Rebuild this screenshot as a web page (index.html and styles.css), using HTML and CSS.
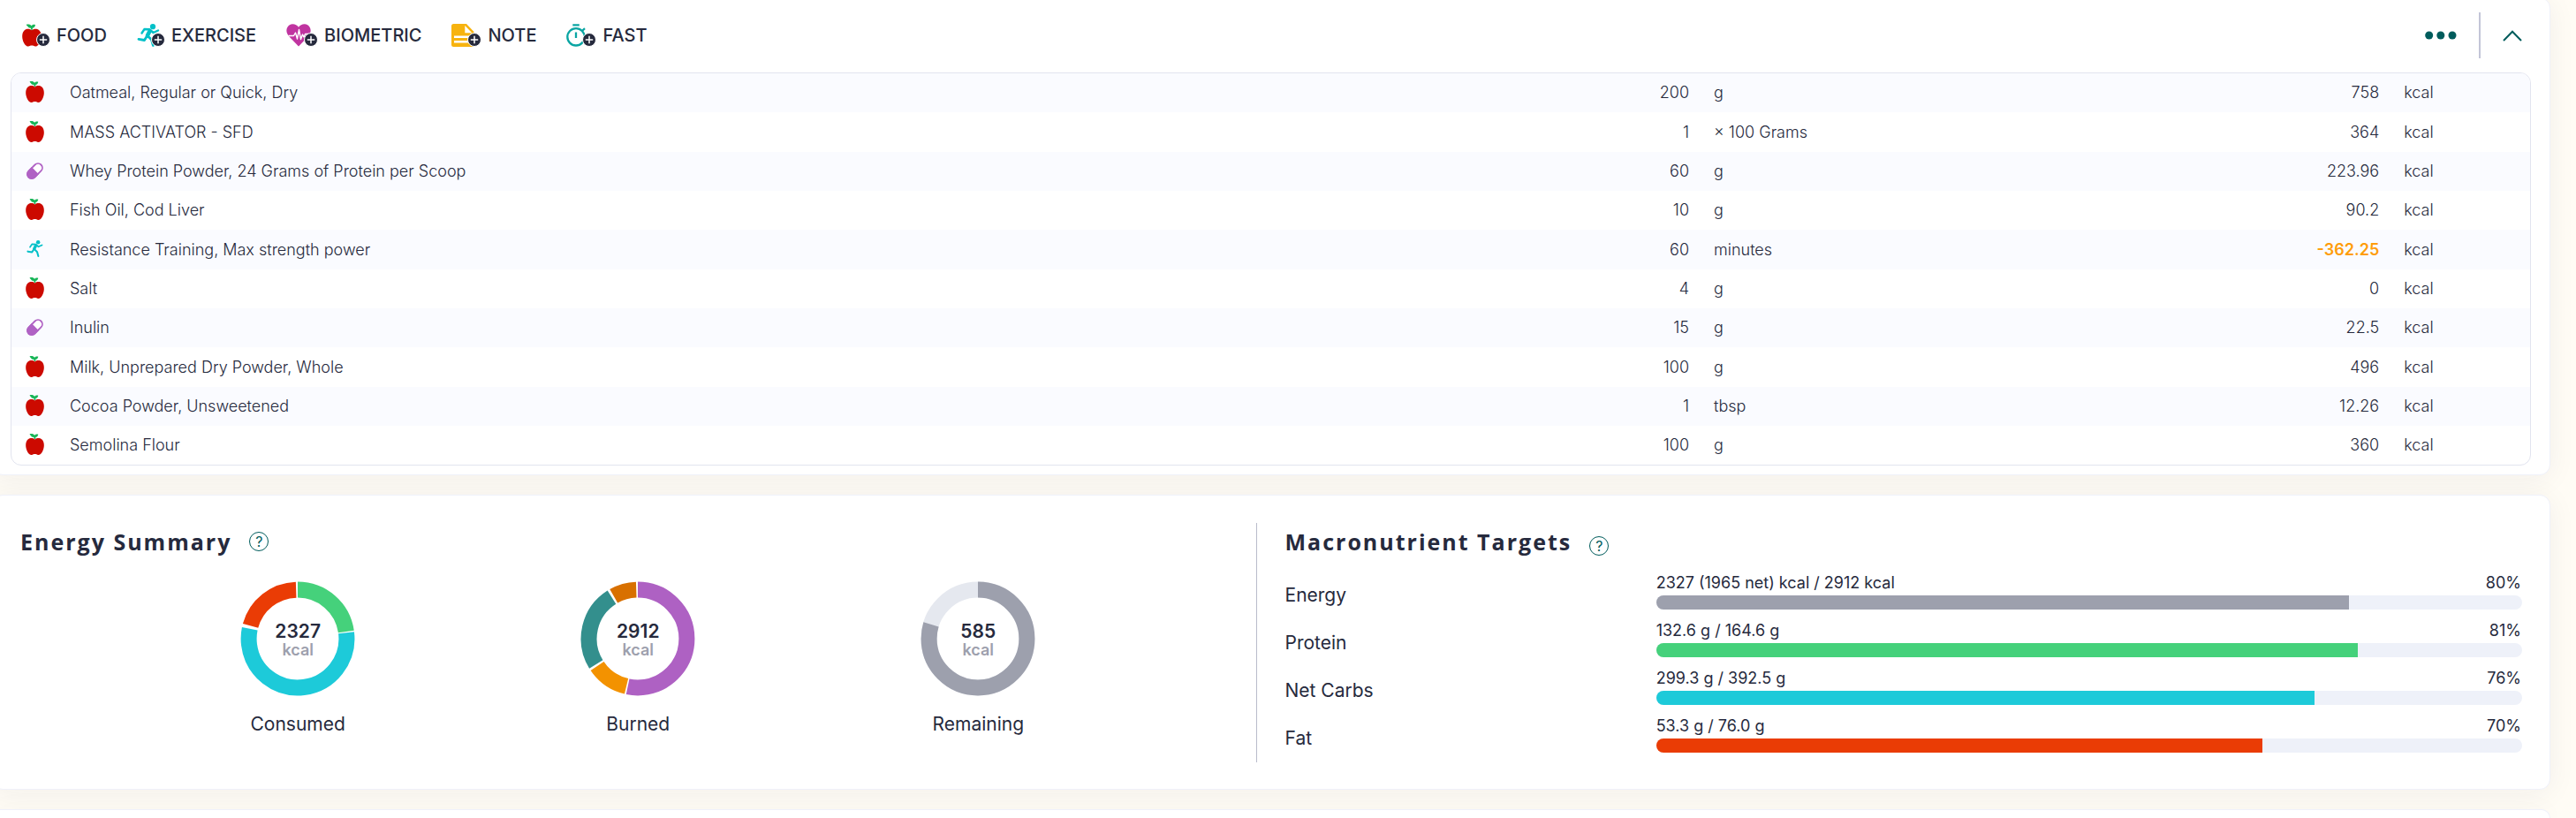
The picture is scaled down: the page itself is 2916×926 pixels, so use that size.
FILE: index.html
```
<!DOCTYPE html>
<html lang="en">
<head>
<meta charset="utf-8">
<title>Diary</title>
<link rel="stylesheet" href="styles.css">
</head>
<body>
<svg class="sprite" aria-hidden="true">
  <symbol id="apple" viewBox="0 0 21 24">
    <path fill="#cc0a00" d="M10.500 6.400C8.500 4.700 5 4.400 2.800 6.300 .4 8.400-.2 12 .4 15.500c.6 3.600 2.300 6.600 4.400 8 1.400.9 2.800.5 3.900-.2 1-.5 2.600-.5 3.600 0 1.100.7 2.500 1.100 3.900.2 2.100-1.400 3.800-4.400 4.400-8 .6-3.500 0-7.100-2.400-9.200-2.200-1.900-5.700-1.600-7.700.1z"/>
    <path fill="#17b557" d="M4.700.3c2.300-.6 4.600 0 5.400 1.500C11.200.5 12.700 0 14.300.7c-.3 2-1.500 3.200-3.100 3.400l.2 2h-1.700l-.3-2C7 4.200 6.500 3 6 2.300 5.500 1.500 4.500 1.300 4.700.3z"/>
  </symbol>
  <symbol id="runner" viewBox="0 0 25 26">
    <circle cx="17.500" cy="3.200" r="3.100" fill="#02c0c8"/>
    <g fill="none" stroke="#02c0c8" stroke-linecap="round" stroke-linejoin="round">
      <path stroke-width="2.400" d="M5 10.500 8 6l6 .3 4 3.700 5.500-2.500"/>
      <path stroke-width="4.600" d="M14 8.200 11.500 13"/>
      <path stroke-width="2.800" d="m11.500 13.500 4.500 4.500 1.800 6.500M10.800 14 8 18.500l-6.500-1.200"/>
    </g>
  </symbol>
  <symbol id="pill" viewBox="0 0 19 19">
    <g transform="rotate(45 9.500 9.500)">
      <rect x="4.600" y="-.4" width="9.800" height="19.800" rx="4.900" fill="#fff" stroke="#b062c4" stroke-width="1.800"/>
      <path fill="#b062c4" d="M3.800 9h11.400v5.800a5.700 5.700 0 0 1-11.400 0z"/>
    </g>
  </symbol>
  <symbol id="heart" viewBox="0 0 28 26">
    <path fill="#c034a0" d="M14 25.500 3.200 14.200C-.9 9.900-.3 4.200 3.400 1.500 6.900-1 11.600.2 14 3.700 16.400.2 21.100-1 24.600 1.500c3.700 2.700 4.300 8.400.2 12.700z"/>
    <path fill="none" stroke="#fff" stroke-width="1.400" stroke-linejoin="round" d="M2.500 13.500h6L10.500 10l2 7 2-10.500 2 11 2-5.500 1.500 3 1.500-3.500H26"/>
  </symbol>
  <symbol id="note" viewBox="0 0 26 26">
    <path fill="#f7b30f" d="M2.500 0H17l8.500 9v17h-23A2.500 2.500 0 0 1 0 23.500v-21A2.500 2.500 0 0 1 2.500 0z"/>
    <path fill="#fff" d="M15.300 2v8.300h8zM3 13.500h18v2.400H3zM3 19h18v2.400H3z"/>
  </symbol>
  <symbol id="watch" viewBox="0 0 22 26">
    <circle cx="11" cy="14.800" r="9.700" fill="none" stroke="#0aa5a3" stroke-width="2.300"/>
    <path fill="none" stroke="#0aa5a3" stroke-width="2.300" d="M7.300 1.300h7.500M11 9.500v6.500M18 8l3-2.800"/>
  </symbol>
  <symbol id="plus" viewBox="0 0 16 16">
    <circle cx="8" cy="8" r="7.500" fill="#262a3d" stroke="#fff"/>
    <path fill="none" stroke="#fff" stroke-width="1.500" d="M8 3.800v8.400M3.800 8h8.400"/>
  </symbol>
</svg>

<main class="page">
  <section class="card diary">
    <header class="toolbar">
      <nav class="actions" aria-label="Add to diary">
        <button class="action" type="button"><span class="badge-icon"><svg class="apple-lg"><use href="#apple"/></svg><svg class="plus"><use href="#plus"/></svg></span>FOOD</button>
        <button class="action" type="button"><span class="badge-icon"><svg class="icon-lg"><use href="#runner"/></svg><svg class="plus"><use href="#plus"/></svg></span>EXERCISE</button>
        <button class="action" type="button"><span class="badge-icon extra-wide"><svg class="heart-lg"><use href="#heart"/></svg><svg class="plus"><use href="#plus"/></svg></span>BIOMETRIC</button>
        <button class="action" type="button"><span class="badge-icon wide"><svg class="icon-lg"><use href="#note"/></svg><svg class="plus"><use href="#plus"/></svg></span>NOTE</button>
        <button class="action" type="button"><span class="badge-icon wide"><svg class="apple-lg"><use href="#watch"/></svg><svg class="plus"><use href="#plus"/></svg></span>FAST</button>
      </nav>
      <div class="tools">
        <button class="tool" type="button" aria-label="More options"><svg width="36" height="10" viewBox="0 0 36 10" fill="#005c5c"><circle cx="4.700" cy="5" r="4.500"/><circle cx="17.800" cy="5" r="4.500"/><circle cx="31" cy="5" r="4.500"/></svg></button>
        <span class="tool-divider"></span>
        <button class="tool" type="button" aria-label="Collapse"><svg width="22" height="13" viewBox="0 0 22 13" fill="none" stroke="#005c5c" stroke-width="2"><path d="M1 12 11 1.700 21 12"/></svg></button>
      </div>
    </header>
    <div class="table-frame">
      <table class="entries">
        <colgroup><col class="c-icon"><col><col class="c-qty"><col class="c-unit"><col class="c-value"><col class="c-kcal"></colgroup>
        <tbody>
          <tr><td class="kind"><svg class="apple"><use href="#apple"/></svg></td><td>Oatmeal, Regular or Quick, Dry</td><td class="num">200</td><td>g</td><td class="num">758</td><td>kcal</td></tr>
          <tr><td class="kind"><svg class="apple"><use href="#apple"/></svg></td><td>MASS ACTIVATOR - SFD</td><td class="num">1</td><td>× 100 Grams</td><td class="num">364</td><td>kcal</td></tr>
          <tr><td class="kind"><svg class="small"><use href="#pill"/></svg></td><td>Whey Protein Powder, 24 Grams of Protein per Scoop</td><td class="num">60</td><td>g</td><td class="num">223.96</td><td>kcal</td></tr>
          <tr><td class="kind"><svg class="apple"><use href="#apple"/></svg></td><td>Fish Oil, Cod Liver</td><td class="num">10</td><td>g</td><td class="num">90.2</td><td>kcal</td></tr>
          <tr><td class="kind"><svg class="small"><use href="#runner"/></svg></td><td>Resistance Training, Max strength power</td><td class="num">60</td><td>minutes</td><td class="num burned">-362.25</td><td>kcal</td></tr>
          <tr><td class="kind"><svg class="apple"><use href="#apple"/></svg></td><td>Salt</td><td class="num">4</td><td>g</td><td class="num">0</td><td>kcal</td></tr>
          <tr><td class="kind"><svg class="small"><use href="#pill"/></svg></td><td>Inulin</td><td class="num">15</td><td>g</td><td class="num">22.5</td><td>kcal</td></tr>
          <tr><td class="kind"><svg class="apple"><use href="#apple"/></svg></td><td>Milk, Unprepared Dry Powder, Whole</td><td class="num">100</td><td>g</td><td class="num">496</td><td>kcal</td></tr>
          <tr><td class="kind"><svg class="apple"><use href="#apple"/></svg></td><td>Cocoa Powder, Unsweetened</td><td class="num">1</td><td>tbsp</td><td class="num">12.26</td><td>kcal</td></tr>
          <tr><td class="kind"><svg class="apple"><use href="#apple"/></svg></td><td>Semolina Flour</td><td class="num">100</td><td>g</td><td class="num">360</td><td>kcal</td></tr>
        </tbody>
      </table>
    </div>
  </section>

  <section class="card summary">
    <section class="energy">
      <div class="heading">
        <h2>Energy Summary</h2>
        <button class="help" type="button" aria-label="About the energy summary">?</button>
      </div>
      <div class="charts">
        <figure class="chart">
          <div class="ring">
            <svg viewBox="-65 -65 130 130" fill="none" stroke-width="18">
              <circle r="55.400" pathLength="100" stroke="#45d17b" stroke-dasharray="22.700 100" transform="rotate(-90)"/>
              <circle r="55.400" pathLength="100" stroke="#1dcad9" stroke-dasharray="55.200 100" transform="rotate(-7)"/>
              <circle r="55.400" pathLength="100" stroke="#ea3c05" stroke-dasharray="20.200 100" transform="rotate(195.300)"/>
            </svg>
            <div class="total"><strong>2327</strong><span>kcal</span></div>
          </div>
          <figcaption>Consumed</figcaption>
        </figure>
        <figure class="chart">
          <div class="ring">
            <svg viewBox="-65 -65 130 130" fill="none" stroke-width="18">
              <circle r="55.400" pathLength="100" stroke="#ae61c3" stroke-dasharray="53.300 100" transform="rotate(-90)"/>
              <circle r="55.400" pathLength="100" stroke="#f39200" stroke-dasharray="11.800 100" transform="rotate(103.500)"/>
              <circle r="55.400" pathLength="100" stroke="#338f8d" stroke-dasharray="24.800 100" transform="rotate(148.500)"/>
              <circle r="55.400" pathLength="100" stroke="#d87000" stroke-dasharray="7.700 100" transform="rotate(240.500)"/>
            </svg>
            <div class="total"><strong>2912</strong><span>kcal</span></div>
          </div>
          <figcaption>Burned</figcaption>
        </figure>
        <figure class="chart">
          <div class="ring">
            <svg viewBox="-65 -65 130 130" fill="none" stroke-width="18">
              <circle r="55.400" stroke="#e5e8ef"/>
              <circle r="55.400" pathLength="100" stroke="#9da0ad" stroke-dasharray="79.700 100" transform="rotate(-90)"/>
            </svg>
            <div class="total"><strong>585</strong><span>kcal</span></div>
          </div>
          <figcaption>Remaining</figcaption>
        </figure>
      </div>
    </section>

    <section class="macros">
      <div class="heading">
        <h2>Macronutrient Targets</h2>
        <button class="help low" type="button" aria-label="About macronutrient targets">?</button>
      </div>
      <div class="targets">
        <div class="target"><span class="name">Energy</span><div class="meter"><div class="figures"><span>2327 (1965 net) kcal / 2912 kcal</span><span>80%</span></div><div class="track"><div class="fill fill-energy" style="width:80%"></div></div></div></div>
        <div class="target"><span class="name">Protein</span><div class="meter"><div class="figures"><span>132.6 g / 164.6 g</span><span>81%</span></div><div class="track"><div class="fill fill-protein" style="width:81%"></div></div></div></div>
        <div class="target"><span class="name">Net Carbs</span><div class="meter"><div class="figures"><span>299.3 g / 392.5 g</span><span>76%</span></div><div class="track"><div class="fill fill-carbs" style="width:76%"></div></div></div></div>
        <div class="target"><span class="name">Fat</span><div class="meter"><div class="figures"><span>53.3 g / 76.0 g</span><span>70%</span></div><div class="track"><div class="fill fill-fat" style="width:70%"></div></div></div></div>
      </div>
    </section>
  </section>

  <section class="card next"></section>
</main>
</body>
</html>
```

FILE: styles.css
```
* { box-sizing: border-box; }

body {
  margin: 0;
  height: 100vh;
  overflow: hidden;
  background: #fffcf5;
  color: #262a3d;
  font-family: Inter, "Liberation Sans", sans-serif;
  font-size: 18px;
  line-height: 24px;
}

button {
  border: 0;
  padding: 0;
  background: none;
  color: inherit;
  font: inherit;
}

.sprite { position: absolute; width: 0; height: 0; }

.page {
  display: flex;
  flex-direction: column;
  gap: 22px;
  height: calc(100vh + 3px);
  padding: 0 29px 0 0;
  margin: -3px 0 0 -9px;
  overflow: hidden;
}

.card {
  flex: none;
  padding: 0 21px 0 20px;
  border: 1px solid #eff1fa;
  border-radius: 12px;
  background: #fff;
  box-shadow: 0 4px 32px rgba(38, 42, 61, 0.06);
}

.diary { padding-bottom: 10px; }

/* Toolbar */
.toolbar {
  display: flex;
  align-items: center;
  justify-content: space-between;
  height: 84px;
  padding: 0 10px 0 13px;
}

.actions { display: flex; gap: 34px; }

.action {
  display: flex;
  align-items: center;
  gap: 7px;
  font-size: 20px;
  font-weight: 500;
}

.badge-icon {
  position: relative;
  width: 32px;
  height: 26px;
}

.badge-icon.wide { width: 34px; }
.badge-icon.extra-wide { width: 36px; }
.badge-icon svg { display: block; }
.icon-lg { width: 26px; height: 26px; }
.heart-lg { width: 28px; height: 26px; }
.apple-lg { width: 22px; height: 26px; }

.plus {
  position: absolute;
  right: 0;
  bottom: 0;
  width: 16px;
  height: 16px;
}

.tools { display: flex; align-items: center; gap: 25px; }
.tool { display: flex; }
.tool-divider { width: 2px; height: 52px; background: #c3c5d8; }

/* Entries */
.table-frame {
  overflow: hidden;
  border: 1px solid #e2e4ef;
  border-radius: 12px;
}

.entries {
  width: 100%;
  border-collapse: collapse;
  table-layout: fixed;
  font-weight: 300;
}

.entries tr { height: 44px; }
.entries tr:nth-child(3n + 2) { height: 45px; }
.entries tr:nth-child(odd) { background: #fafbff; }
.entries td { padding: 0 14px; white-space: nowrap; }
.entries .kind { padding: 0 2px 2px 0; text-align: center; }
.entries td:nth-child(2) { padding-left: 12px; }
.entries .num { text-align: right; }
.entries .burned { color: #ff9d0a; font-weight: 600; }
.entries svg { display: block; margin: 0 auto; }

.c-icon { width: 54px; }
.c-qty { width: 5%; }
.c-unit { width: 14%; }
.c-value { width: 13.4%; }
.c-kcal { width: 5.5%; }

.apple { width: 21px; height: 24px; }
.small { width: 19px; height: 19px; }

/* Summary */
.summary {
  display: flex;
  padding-top: 31px;
  padding-bottom: 30px;
}

.energy {
  width: 49.44%;
  padding-left: 11px;
  border-right: 1px solid #b9bccb;
}

.macros { flex: 1; padding: 0 10px 0 32px; }

.heading { display: flex; align-items: center; gap: 20px; height: 42px; }

h2 {
  margin: 0;
  font-family: "Open Sans", "Noto Sans", sans-serif;
  font-size: 25px;
  font-weight: 700;
  line-height: 32px;
  letter-spacing: 2px;
}

.help {
  width: 22px;
  height: 22px;
  border: 1px solid #005c5c;
  border-radius: 50%;
  color: #005c5c;
  font-size: 16px;
  line-height: 20px;
}

.help.low { margin-top: 10px; }

.charts {
  display: grid;
  grid-template-columns: repeat(3, 1fr);
  width: 82.6%;
  margin: 24px auto 0;
}

.chart {
  display: flex;
  flex-direction: column;
  align-items: center;
  gap: 20px;
  margin: 0;
  font-size: 21px;
}

.ring { display: grid; width: 130px; height: 130px; }
.ring > * { grid-area: 1 / 1; }

.total {
  display: flex;
  flex-direction: column;
  align-items: center;
  justify-content: center;
  padding-top: 3px;
  line-height: 21px;
}

.total strong { font-weight: 600; }
.total span { color: #9da0ad; font-size: 18px; font-weight: 600; }

.targets { margin-top: 13px; }

.target {
  display: grid;
  grid-template-columns: 30% 70%;
  align-items: center;
  height: 54px;
}

.name { font-size: 21px; }

.meter { padding-bottom: 10px; }

.figures {
  display: flex;
  justify-content: space-between;
  padding: 0 1px 2px 0;
}

.track {
  overflow: hidden;
  height: 16px;
  border-radius: 8px;
  background: #eef1f9;
}

.fill { height: 100%; }
.fill-energy { background: #9da0ad; }
.fill-protein { background: #45d17b; }
.fill-carbs { background: #1dcad9; }
.fill-fat { background: #ea3c05; }

/* The following card continues below the fold */
.next {
  flex: 1;
  border-bottom: 0;
  border-radius: 12px 12px 0 0;
}
```
